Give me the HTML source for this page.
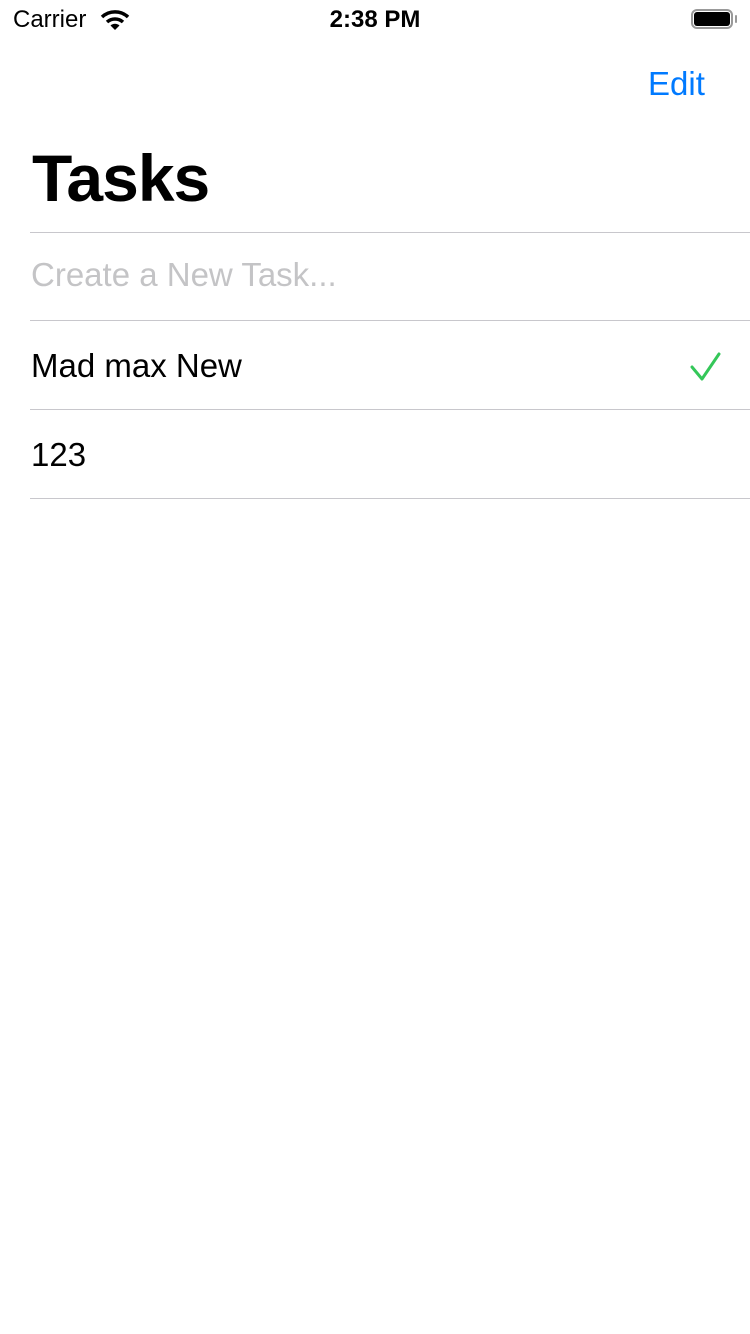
<!DOCTYPE html>
<html><head><meta charset="utf-8"><style>
body{margin:0;width:750px;height:1334px;background:#fff;font-family:"Liberation Sans",sans-serif;position:relative;overflow:hidden}
.a{position:absolute}
.line{position:absolute;left:30px;right:0;height:1px;background:#c8c7cc}
</style></head><body>
<div class="a" style="left:13px;top:6px;font-size:24px;color:#000">Carrier</div>
<svg class="a" style="left:100px;top:9px" width="30" height="22" viewBox="0 0 30 22">
<path d="M2 8 A19 19 0 0 1 28 8" stroke="#000" stroke-width="3.5" fill="none"/>
<path d="M7 13 A12 12 0 0 1 23 13" stroke="#000" stroke-width="3.5" fill="none"/>
<path d="M15 21 L10.5 16.5 A6.5 6.5 0 0 1 19.5 16.5 Z" fill="#000"/>
</svg>
<div class="a" style="left:0;width:750px;text-align:center;top:6px;font-size:24px;font-weight:bold">2:38 PM</div>
<div class="a" style="left:691px;top:9px;width:42px;height:20px;border:2px solid #999;border-radius:6px;box-sizing:border-box"></div>
<div class="a" style="left:694px;top:12px;width:36px;height:14px;background:#000;border-radius:3px"></div>
<div class="a" style="left:735px;top:15px;width:2px;height:8px;background:#999;border-radius:1px"></div>
<div class="a" style="left:648px;top:65px;font-size:33px;color:#007aff">Edit</div>
<div class="a" style="left:32px;top:140px;font-size:66px;font-weight:bold;letter-spacing:-1px">Tasks</div>
<div class="line" style="top:232px"></div>
<div class="a" style="left:31px;top:256px;font-size:33px;color:#c4c4c6">Create a New Task...</div>
<div class="line" style="top:320px"></div>
<div class="a" style="left:31px;top:347px;font-size:33px">Mad max New</div>
<svg class="a" style="left:685px;top:348px" width="40" height="38"><path d="M7 19 L17 31 L34 6" stroke="#34c759" stroke-width="3" fill="none" stroke-linecap="round" stroke-linejoin="round"/></svg>
<div class="line" style="top:409px"></div>
<div class="a" style="left:31px;top:436px;font-size:33px">123</div>
<div class="line" style="top:498px"></div>
</body></html>
